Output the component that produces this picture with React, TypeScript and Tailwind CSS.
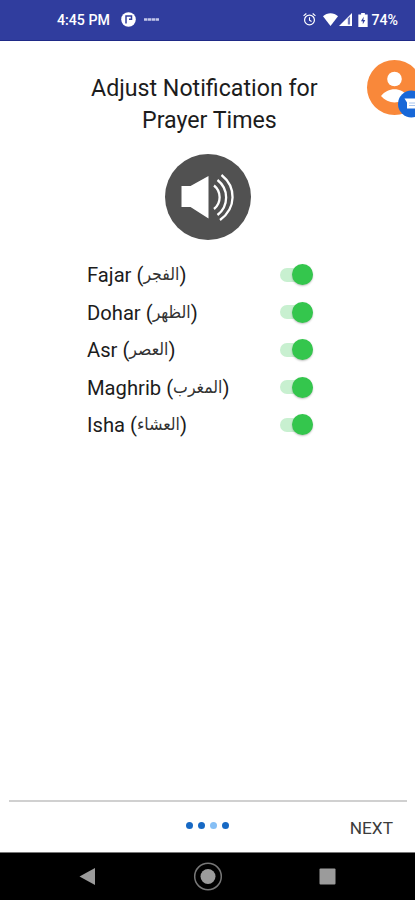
import React, { useState } from 'react';

const PRAYERS = [
  { id: 'fajar', name: 'Fajar', arabic: 'الفجر' },
  { id: 'dohar', name: 'Dohar', arabic: 'الظهر' },
  { id: 'asr', name: 'Asr', arabic: 'العصر' },
  { id: 'maghrib', name: 'Maghrib', arabic: 'المغرب' },
  { id: 'isha', name: 'Isha', arabic: 'العشاء' },
];

const StatusBar: React.FC = () => (
  <div className="h-[41px] shrink-0 flex items-center justify-between pl-[57px] pr-[17px] bg-[#303d9e] border-b border-[#1f2a87] text-white">
    <div className="flex items-center">
      <span className="w-[53px] pt-0.5 text-[14.2px] font-medium whitespace-nowrap">4:45 PM</span>
      <svg className="ml-[11px] w-[15px] h-[15px]" viewBox="0 0 15 15">
        <circle cx="7.5" cy="7.5" r="7.3" fill="#fff" />
        <path d="M5 11.5V4h5.5v3.2H8" fill="none" stroke="#303d9e" strokeWidth="1.5" />
      </svg>
      <svg className="ml-2 w-[15px] h-[5px]" viewBox="0 0 15 5">
        <path d="M0 2.5h15" stroke="#c3c8ea" strokeWidth="2.6" strokeDasharray="3.4 .5" />
      </svg>
    </div>
    <div className="flex items-center">
      <svg className="w-[13px] h-[15px]" viewBox="0 0 14 15" fill="none" stroke="#fff">
        <circle cx="7" cy="8" r="5.3" strokeWidth="1.3" />
        <path d="M7 5v3.2l2.2 1.4M.6 3.6 3.6 1M13.4 3.6 10.4 1" strokeWidth="1.2" />
      </svg>
      <svg className="ml-[7px] w-[15px] h-[13px]" viewBox="0 0 15 13">
        <path d="M0 3.2C4.2-.8 10.8-.8 15 3.2L7.5 13z" fill="#fff" />
      </svg>
      <svg className="ml-px w-[13px] h-[13px]" viewBox="0 0 14 14">
        <path d="M0 14 14 0v14z" fill="#fff" />
        <path d="M9.5 6v6.5h2.4V3.6z" fill="#303d9e" opacity=".7" />
      </svg>
      <svg className="ml-[6px] w-[10px] h-[14px]" viewBox="0 0 10 15">
        <path d="M3 0h4v1.6h3V15H0V1.6h3z" fill="#fff" />
        <path d="M5.8 4 2.8 8.8h2V12l2.6-4.6h-2z" fill="#303d9e" />
      </svg>
      <span className="ml-[3px] pt-0.5 text-[14.2px] font-medium">74%</span>
    </div>
  </div>
);

const ProfileBadge: React.FC = () => (
  <div className="absolute right-0 top-[17px] w-[49px] h-[62px] overflow-hidden">
    <svg className="w-[70px] h-[62px]" viewBox="0 0 70 62">
      <circle cx="28.5" cy="29.5" r="27.5" fill="#f9883a" />
      <circle cx="28.5" cy="21" r="7.3" fill="#fff" />
      <path d="M15 38c7-9 20-9 27 0-7 8.5-20 8.5-27 0z" fill="#fff" />
      <circle cx="45.5" cy="46" r="13.5" fill="#1767d8" />
      <path d="M38.5 40.5h14v10H41v-6z" fill="#fff" />
      <path d="M43 45h8M43 47.5h8" stroke="#8fb5eb" strokeWidth=".8" />
    </svg>
  </div>
);

const SpeakerIcon: React.FC = () => (
  <svg className="w-[86px] h-[86px]" viewBox="0 0 86 86">
    <circle cx="43" cy="43" r="43" fill="#515151" />
    <path d="M16.5 32h9L43.5 22v42.5L25.5 53h-9z" fill="#fff" />
    <g fill="none" stroke="#fff" strokeWidth="2.3">
      <path d="M49 31.5c7.5 6 7.5 17.5 0 23.5" />
      <path d="M52.5 26c11.5 9 11.5 26 0 35" />
      <path d="M56.5 21c15 12 15 33-1.5 45" />
    </g>
  </svg>
);

interface ToggleProps {
  checked: boolean;
  label: string;
  onChange: () => void;
}

const Toggle: React.FC<ToggleProps> = ({ checked, label, onChange }) => (
  <button
    role="switch"
    aria-checked={checked}
    aria-label={label}
    onClick={onChange}
    className={`w-[33px] h-[14px] flex items-center rounded-full ${
      checked ? 'justify-end bg-[#c8f0d0]' : 'justify-start bg-gray-300'
    }`}
  >
    <span
      className={`w-[21px] h-[21px] shrink-0 rounded-full shadow-[0_1px_2px_rgba(0,0,0,0.25)] ${
        checked ? 'bg-[#34c64d]' : 'bg-gray-50'
      }`}
    />
  </button>
);

const App: React.FC = () => {
  const [enabled, setEnabled] = useState<string[]>(PRAYERS.map((p) => p.id));

  const toggle = (id: string) =>
    setEnabled((prev) => (prev.includes(id) ? prev.filter((p) => p !== id) : [...prev, id]));

  return (
    <div className="w-full h-screen flex flex-col bg-white overflow-hidden font-[Roboto,'DejaVu_Sans',sans-serif]">
      <StatusBar />

      <main className="relative flex-1 flex flex-col">
        <ProfileBadge />
        <h1 className="mt-[31px] ml-[91px] w-[240px] text-[23.2px] leading-8 text-[#1c1c1c]">
          Adjust Notification for
          <span className="block pl-[51px]">Prayer Times</span>
        </h1>
        <div className="mt-[18px] ml-[165px]">
          <SpeakerIcon />
        </div>

        <ul className="mt-4 ml-[87px] w-[226px]">
          {PRAYERS.map((prayer) => (
            <li key={prayer.id} className="h-[37.5px] flex items-center justify-between">
              <span className="pt-px text-[20.2px] leading-6 text-[#1c1c1c] whitespace-nowrap">
                {prayer.name} (
                <bdi
                  lang="ar"
                  className="align-[2px] leading-none text-[17.5px] text-[#333] font-['DejaVu_Sans_Condensed','DejaVu_Sans',sans-serif]"
                >
                  {prayer.arabic}
                </bdi>
                )
              </span>
              <Toggle
                label={prayer.name}
                checked={enabled.includes(prayer.id)}
                onChange={() => toggle(prayer.id)}
              />
            </li>
          ))}
        </ul>
      </main>

      {/* Pager */}
      <footer className="h-[52px] ml-[9px] mr-2 shrink-0 flex items-center justify-between border-t-2 border-[#d0d0d0]">
        <div className="ml-[177px] mb-[3px] flex gap-[5px]">
          <span className="w-[7px] h-[7px] rounded-full bg-[#1769c4]" />
          <span className="w-[7px] h-[7px] rounded-full bg-[#1769c4]" />
          <span className="w-[7px] h-[7px] rounded-full bg-[#86bff5]" />
          <span className="w-[7px] h-[7px] rounded-full bg-[#1769c4]" />
        </div>
        <button className="mr-[14px] mt-1 text-[17.3px] text-[#3c3c3c]">NEXT</button>
      </footer>

      <nav className="h-12 shrink-0 bg-black border-t border-[#777]">
        <svg className="w-[415px] h-[47px]" viewBox="0 0 415 47" fill="#9b9b9b">
          <path d="M79.5 23.5 95 15v17z" />
          <circle cx="208" cy="23.5" r="13.3" fill="none" stroke="#777" strokeWidth="1.5" />
          <circle cx="208" cy="23.5" r="7.5" />
          <rect x="319.5" y="15.5" width="16" height="16" rx="1" />
        </svg>
      </nav>
    </div>
  );
};

export default App;
